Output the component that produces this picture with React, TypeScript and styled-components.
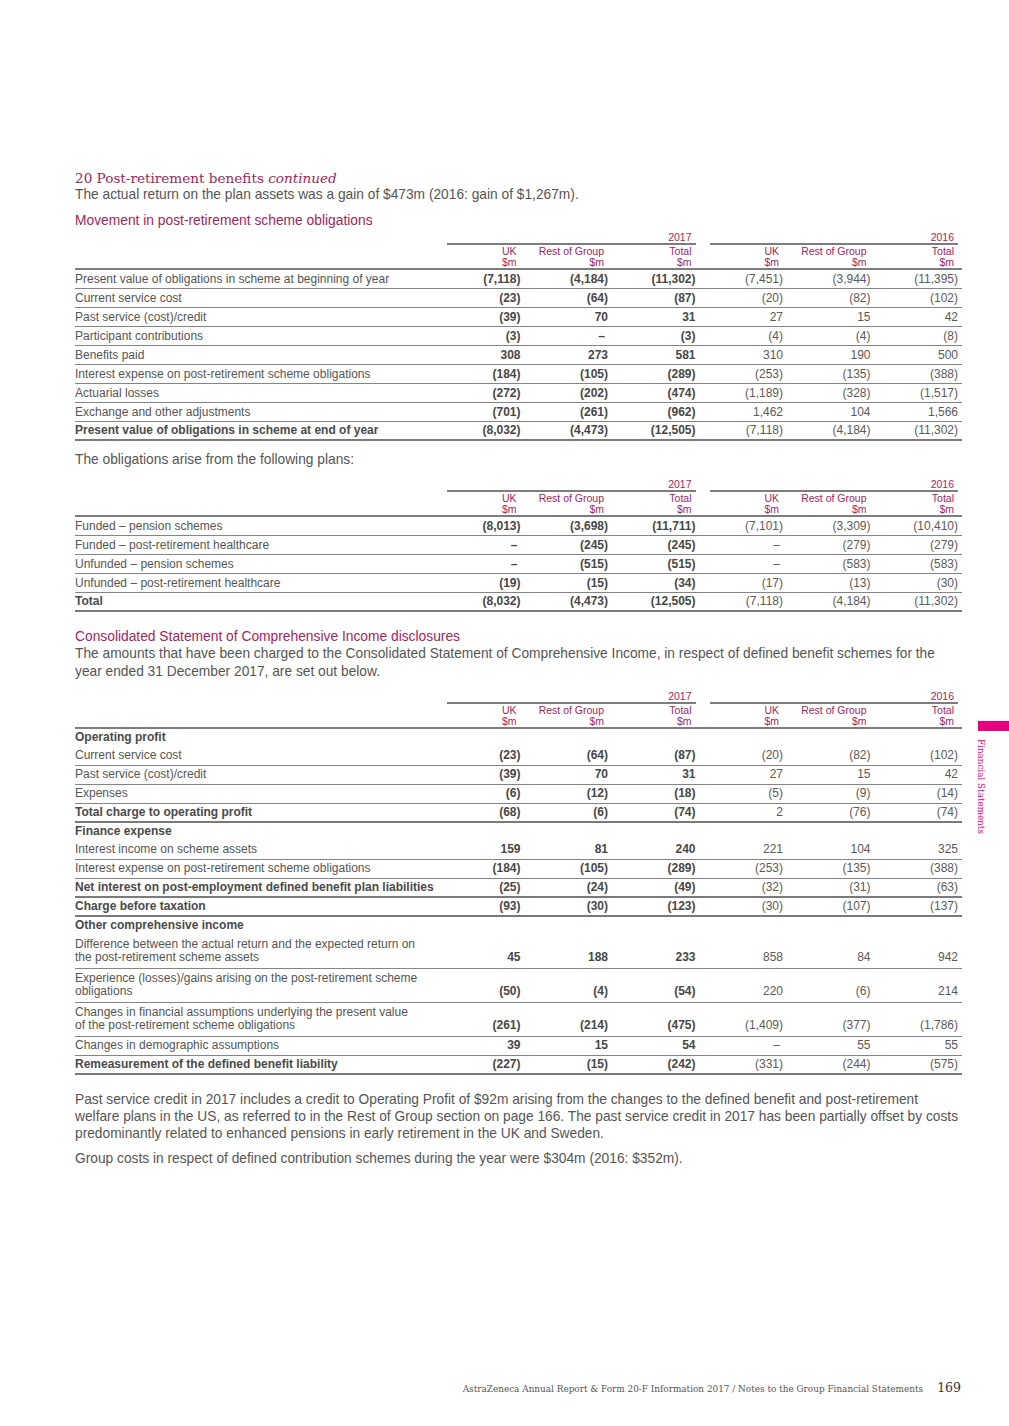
import React from "react";
import styled, { createGlobalStyle } from "styled-components";

const GlobalStyle = createGlobalStyle`
  html, body { margin: 0; padding: 0; background: #fff; }
  body { font-family: "Liberation Sans", Arial, sans-serif; color: #555; }
  * { box-sizing: border-box; }
`;

const PLUM = "#a0265f";
const SANS = `"Liberation Sans", Arial, sans-serif`;
const SERIF = `"DejaVu Serif", "Liberation Serif", serif`;

const Page = styled.div`
  position: relative;
  width: 1009px;
  min-height: 1426px;
  padding: 170px 47px 0 75px;
  display: flex;
  flex-direction: column;
`;

const Title = styled.h1`
  margin: 0;
  font-family: ${SERIF};
  font-weight: normal;
  font-size: 13.6px;
  line-height: 17px;
  color: ${PLUM};
  em { font-style: italic; }
`;

const Text = styled.p<{ $gap?: number }>`
  margin: ${(p) => p.$gap ?? 0}px 0 0;
  font-family: ${SANS};
  font-size: 13.75px;
  line-height: 17.3px;
  color: #555;
`;

const Lead = styled(Text)`
  line-height: 16px;
`;

const Heading = styled.h2<{ $gap: number }>`
  margin: ${(p) => p.$gap}px 0 0;
  font-family: ${SANS};
  font-weight: normal;
  font-size: 13.8px;
  line-height: 16px;
  color: ${PLUM};
`;

const Table = styled.div<{ $gap: number }>`
  margin-top: ${(p) => p.$gap}px;
  width: 887px;
  font-family: ${SANS};
`;

const GRID = "362px repeat(6, 87.5px)";

const YearRow = styled.div`
  display: grid;
  grid-template-columns: ${GRID};
`;

const YearCell = styled.div<{ $col: number }>`
  grid-column: ${(p) => p.$col} / span 3;
  margin: 0 4px 0 10px;
  padding-right: 4px;
  border-bottom: 2px solid #7d7d7d;
  text-align: right;
  font-size: 10.5px;
  line-height: 12px;
  color: ${PLUM};
`;

const ColHeadRow = styled.div`
  display: grid;
  grid-template-columns: ${GRID};
  border-bottom: 2px solid #7d7d7d;
  padding: 1px 0 0;
`;

const ColHead = styled.div`
  text-align: right;
  padding-right: 8px;
  font-size: 10.5px;
  line-height: 11px;
  color: ${PLUM};
  white-space: pre-line;
`;

const Row = styled.div<{ $kind: "data" | "total" | "sub" | "tall" }>`
  display: grid;
  grid-template-columns: ${GRID};
  align-items: ${(p) => (p.$kind === "tall" ? "end" : "center")};
  min-height: ${(p) => (p.$kind === "tall" ? 34 : p.$kind === "sub" ? 18 : 19)}px;
  padding: ${(p) => (p.$kind === "tall" ? "3px 0 4px" : "0")};
  border-bottom: ${(p) =>
    p.$kind === "sub"
      ? "0"
      : p.$kind === "total"
      ? "2px solid #7a7a7a"
      : "1px solid #858585"};
`;

const Label = styled.div<{ $bold?: boolean }>`
  font-size: 12px;
  line-height: 13px;
  color: ${(p) => (p.$bold ? "#4a4a4a" : "#555")};
  font-weight: ${(p) => (p.$bold ? 700 : 400)};
  white-space: pre-line;
`;

const Value = styled.div<{ $current: boolean; $dash?: boolean }>`
  text-align: right;
  padding-right: ${(p) => (p.$dash ? 7 : 4)}px;
  font-size: 12px;
  line-height: 13px;
  color: ${(p) => (p.$current ? "#474747" : "#5a5a5a")};
  font-weight: ${(p) => (p.$current ? 700 : 400)};
`;

const Footer = styled.footer`
  margin-top: auto;
  padding: 0 1px 31px 0;
  display: flex;
  justify-content: flex-end;
  align-items: baseline;
  gap: 14px;
`;

const FooterText = styled.span`
  font-family: ${SERIF};
  font-size: 8.9px;
  color: #555;
`;

const PageNum = styled.span`
  font-family: ${SERIF};
  font-size: 12.5px;
  color: #333;
`;

const SideTab = styled.div`
  position: absolute;
  right: 0;
  top: 721px;
  width: 31px;
  display: flex;
  flex-direction: column;
  align-items: flex-start;
  gap: 8px;
`;

const TabBar = styled.div`
  width: 31px;
  height: 10px;
  background: #e6007e;
`;

const TabText = styled.div`
  writing-mode: vertical-rl;
  font-family: ${SERIF};
  font-size: 8.8px;
  line-height: 10px;
  color: #e6007e;
  margin-left: -2px;
`;

type RowData = {
  label: string;
  kind?: "data" | "total" | "sub" | "tall";
  values?: string[];
};

const HEADS = ["UK\n$m", "Rest of Group\n$m", "Total\n$m", "UK\n$m", "Rest of Group\n$m", "Total\n$m"];

const FinTable: React.FC<{ rows: RowData[]; gap: number }> = ({ rows, gap }) => (
  <Table $gap={gap}>
    <YearRow>
      <YearCell $col={2}>2017</YearCell>
      <YearCell $col={5}>2016</YearCell>
    </YearRow>
    <ColHeadRow>
      <div />
      {HEADS.map((h, i) => (
        <ColHead key={i}>{h}</ColHead>
      ))}
    </ColHeadRow>
    {rows.map((r, i) => {
      const kind = r.kind ?? "data";
      const bold = kind === "total" || kind === "sub";
      return (
        <Row key={i} $kind={kind}>
          <Label $bold={bold}>{r.label}</Label>
          {(r.values ?? []).map((v, j) => (
            <Value key={j} $current={j < 3} $dash={v === "–"}>
              {v}
            </Value>
          ))}
        </Row>
      );
    })}
  </Table>
);

const movement: RowData[] = [
  { label: "Present value of obligations in scheme at beginning of year", values: ["(7,118)", "(4,184)", "(11,302)", "(7,451)", "(3,944)", "(11,395)"] },
  { label: "Current service cost", values: ["(23)", "(64)", "(87)", "(20)", "(82)", "(102)"] },
  { label: "Past service (cost)/credit", values: ["(39)", "70", "31", "27", "15", "42"] },
  { label: "Participant contributions", values: ["(3)", "–", "(3)", "(4)", "(4)", "(8)"] },
  { label: "Benefits paid", values: ["308", "273", "581", "310", "190", "500"] },
  { label: "Interest expense on post-retirement scheme obligations", values: ["(184)", "(105)", "(289)", "(253)", "(135)", "(388)"] },
  { label: "Actuarial losses", values: ["(272)", "(202)", "(474)", "(1,189)", "(328)", "(1,517)"] },
  { label: "Exchange and other adjustments", values: ["(701)", "(261)", "(962)", "1,462", "104", "1,566"] },
  { label: "Present value of obligations in scheme at end of year", kind: "total", values: ["(8,032)", "(4,473)", "(12,505)", "(7,118)", "(4,184)", "(11,302)"] },
];

const plans: RowData[] = [
  { label: "Funded – pension schemes", values: ["(8,013)", "(3,698)", "(11,711)", "(7,101)", "(3,309)", "(10,410)"] },
  { label: "Funded – post-retirement healthcare", values: ["–", "(245)", "(245)", "–", "(279)", "(279)"] },
  { label: "Unfunded – pension schemes", values: ["–", "(515)", "(515)", "–", "(583)", "(583)"] },
  { label: "Unfunded – post-retirement healthcare", values: ["(19)", "(15)", "(34)", "(17)", "(13)", "(30)"] },
  { label: "Total", kind: "total", values: ["(8,032)", "(4,473)", "(12,505)", "(7,118)", "(4,184)", "(11,302)"] },
];

const income: RowData[] = [
  { label: "Operating profit", kind: "sub" },
  { label: "Current service cost", values: ["(23)", "(64)", "(87)", "(20)", "(82)", "(102)"] },
  { label: "Past service (cost)/credit", values: ["(39)", "70", "31", "27", "15", "42"] },
  { label: "Expenses", values: ["(6)", "(12)", "(18)", "(5)", "(9)", "(14)"] },
  { label: "Total charge to operating profit", kind: "total", values: ["(68)", "(6)", "(74)", "2", "(76)", "(74)"] },
  { label: "Finance expense", kind: "sub" },
  { label: "Interest income on scheme assets", values: ["159", "81", "240", "221", "104", "325"] },
  { label: "Interest expense on post-retirement scheme obligations", values: ["(184)", "(105)", "(289)", "(253)", "(135)", "(388)"] },
  { label: "Net interest on post-employment defined benefit plan liabilities", kind: "total", values: ["(25)", "(24)", "(49)", "(32)", "(31)", "(63)"] },
  { label: "Charge before taxation", kind: "total", values: ["(93)", "(30)", "(123)", "(30)", "(107)", "(137)"] },
  { label: "Other comprehensive income", kind: "sub" },
  { label: "Difference between the actual return and the expected return on\nthe post-retirement scheme assets", kind: "tall", values: ["45", "188", "233", "858", "84", "942"] },
  { label: "Experience (losses)/gains arising on the post-retirement scheme\nobligations", kind: "tall", values: ["(50)", "(4)", "(54)", "220", "(6)", "214"] },
  { label: "Changes in financial assumptions underlying the present value\nof the post-retirement scheme obligations", kind: "tall", values: ["(261)", "(214)", "(475)", "(1,409)", "(377)", "(1,786)"] },
  { label: "Changes in demographic assumptions", values: ["39", "15", "54", "–", "55", "55"] },
  { label: "Remeasurement of the defined benefit liability", kind: "total", values: ["(227)", "(15)", "(242)", "(331)", "(244)", "(575)"] },
];

export default function App() {
  return (
    <>
      <GlobalStyle />
      <Page>
        <Title>
          20 Post-retirement benefits <em>continued</em>
        </Title>
        <Lead>The actual return on the plan assets was a gain of $473m (2016: gain of $1,267m).</Lead>
        <Heading $gap={10}>Movement in post-retirement scheme obligations</Heading>
        <FinTable rows={movement} gap={2} />
        <Text $gap={10}>The obligations arise from the following plans:</Text>
        <FinTable rows={plans} gap={10} />
        <Heading $gap={17}>Consolidated Statement of Comprehensive Income disclosures</Heading>
        <Text>
          The amounts that have been charged to the Consolidated Statement of Comprehensive Income, in respect of defined
          benefit schemes for the year ended 31 December 2017, are set out below.
        </Text>
        <FinTable rows={income} gap={10} />
        <Text $gap={16}>
          Past service credit in 2017 includes a credit to Operating Profit of $92m arising from the changes to the defined
          benefit and post-retirement welfare plans in the US, as referred to in the Rest of Group section on page 166. The
          past service credit in 2017 has been partially offset by costs predominantly related to enhanced pensions in
          early retirement in the UK and Sweden.
        </Text>
        <Text $gap={7}>Group costs in respect of defined contribution schemes during the year were $304m (2016: $352m).</Text>
        <Footer>
          <FooterText>
            AstraZeneca Annual Report &amp; Form 20-F Information 2017 / Notes to the Group Financial Statements
          </FooterText>
          <PageNum>169</PageNum>
        </Footer>
        <SideTab>
          <TabBar />
          <TabText>Financial Statements</TabText>
        </SideTab>
      </Page>
    </>
  );
}
